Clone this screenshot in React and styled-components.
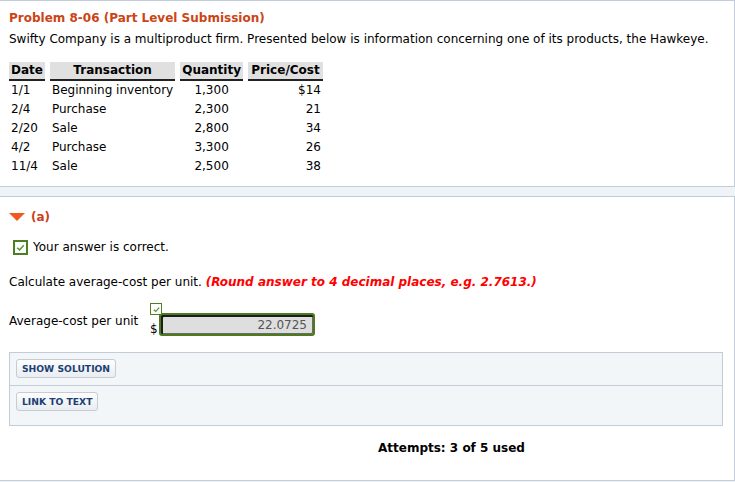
import React from "react";
import styled, { createGlobalStyle } from "styled-components";

const Global = createGlobalStyle`
  html, body { margin: 0; padding: 0; }
  body {
    background: #eef3f8;
    font-family: "DejaVu Sans", Verdana, sans-serif;
    font-size: 12px;
    color: #000;
  }
`;

const Page = styled.div`
  display: flex;
  flex-direction: column;
  gap: 9px;
  width: 735px;
`;

const Panel = styled.section`
  background: #fff;
  border: 1px solid #c3cdd9;
  border-left: none;
  box-sizing: border-box;
  height: ${(p) => p.$h}px;
  padding: ${(p) => p.$pad};
`;

const Title = styled.h1`
  margin: 0;
  font-size: 12px;
  font-weight: bold;
  color: #cc4416;
  line-height: 16px;
`;

const Text = styled.p`
  margin: ${(p) => p.$m || "0"};
  line-height: 16px;
  font-size: 12px;
`;

const Table = styled.table`
  border-collapse: separate;
  border-spacing: 5px 0;
  margin: 15px 0 0 -5px;
  font-size: 12px;
  table-layout: fixed;
`;

const Th = styled.th`
  background: #e0e0e0;
  border-bottom: 2px solid #222;
  font-weight: bold;
  padding: 0 2px;
  height: 17px;
  line-height: 17px;
  text-align: ${(p) => p.$align || "center"};
  width: ${(p) => p.$w}px;
  white-space: nowrap;
`;

const Td = styled.td`
  padding: 0 2px;
  height: 19px;
  line-height: 19px;
  text-align: ${(p) => p.$align || "left"};
  white-space: nowrap;
`;

const PartHeader = styled.div`
  display: flex;
  align-items: center;
  gap: 6px;
  color: #c9421a;
  font-weight: bold;
  font-size: 12px;
  line-height: 16px;
`;

const Triangle = styled.svg`
  width: 16px;
  height: 8px;
  display: block;
`;

const Correct = styled.div`
  display: flex;
  align-items: center;
  gap: 5px;
  margin: 14px 0 0 4px;
  line-height: 16px;
`;

const CheckBox = styled.span`
  display: inline-flex;
  align-items: center;
  justify-content: center;
  box-sizing: border-box;
  width: ${(p) => p.$size}px;
  height: ${(p) => p.$size}px;
  border: ${(p) => (p.$size > 13 ? 2 : 1)}px solid #4f7d22;
  background: #fff;
`;

const Hint = styled.span`
  color: #ff0000;
  font-weight: bold;
  font-style: italic;
`;

const AnswerRow = styled.div`
  display: flex;
  align-items: flex-start;
  margin-top: 13px;
`;

const AnswerLabel = styled.span`
  line-height: 16px;
  margin-top: 10px;
  width: 141px;
`;

const Field = styled.div`
  position: relative;
  display: flex;
  align-items: flex-end;
  padding-top: 10px;
`;

const Dollar = styled.span`
  font-size: 12px;
  line-height: 12px;
  width: 9px;
  margin-bottom: 1px;
`;

const FieldCheck = styled(CheckBox)`
  position: absolute;
  top: 0;
  left: 0;
`;

const Input = styled.div`
  box-sizing: border-box;
  width: 156px;
  height: 23px;
  border: 2px solid #4e7a1f;
  border-radius: 3px;
  box-shadow: inset 2px 2px 0 #1c1c1c, inset -1px -1px 0 #6a6a6a;
  background: #dedede;
  color: #555;
  text-align: right;
  padding: 0 6px 0 0;
  line-height: 20px;
  font-size: 12px;
`;

const SolutionBox = styled.div`
  margin: 16px 2px 0 0;
  border: 1px solid #c3cdd9;
  background: #f3f6f9;
`;

const SolutionRow = styled.div`
  padding: ${(p) => p.$pad};
  & + & { border-top: 1px solid #c3cdd9; }
`;

const Button = styled.button`
  display: block;
  box-sizing: border-box;
  height: 19px;
  padding: 0 5px;
  font-family: "DejaVu Sans", Verdana, sans-serif;
  font-size: 9.2px;
  font-weight: bold;
  color: #1d3f73;
  background: linear-gradient(#fdfdfe, #e9edf1);
  border: 1px solid #c6ccd4;
  border-radius: 3px;
`;

const Attempts = styled.div`
  margin: 14px 0 0 369px;
  font-weight: bold;
  line-height: 16px;
`;

const CheckMark = ({ size }) => (
  <svg width={size} height={size} viewBox="0 0 10 10">
    <path d="M2 5.2 L4.2 7.2 L8 3" fill="none" stroke="#4f9a2a" strokeWidth="1.4" />
  </svg>
);

const rows = [
  ["1/1", "Beginning inventory", "1,300", "$14"],
  ["2/4", "Purchase", "2,300", "21"],
  ["2/20", "Sale", "2,800", "34"],
  ["4/2", "Purchase", "3,300", "26"],
  ["11/4", "Sale", "2,500", "38"],
];

export default function App() {
  return (
    <>
      <Global />
      <Page>
        <Panel $h={187} $pad="9px 9px">
          <Title>Problem 8-06 (Part Level Submission)</Title>
          <Text $m="5px 0 0">
            Swifty Company is a multiproduct firm. Presented below is information concerning one of its products, the Hawkeye.
          </Text>
          <Table>
            <thead>
              <tr>
                <Th $w={31} $align="left">Date</Th>
                <Th $w={120}>Transaction</Th>
                <Th $w={58}>Quantity</Th>
                <Th $w={71}>Price/Cost</Th>
              </tr>
            </thead>
            <tbody>
              {rows.map((r) => (
                <tr key={r[0]}>
                  <Td>{r[0]}</Td>
                  <Td>{r[1]}</Td>
                  <Td $align="center">{r[2]}</Td>
                  <Td $align="right">{r[3]}</Td>
                </tr>
              ))}
            </tbody>
          </Table>
        </Panel>
        <Panel $h={285} $pad="12px 9px">
          <PartHeader>
            <Triangle viewBox="0 0 16 8">
              <polygon points="0,0 16,0 8,8" fill="#f05a1e" />
            </Triangle>
            (a)
          </PartHeader>
          <Correct>
            <CheckBox $size={15}>
              <CheckMark size={11} />
            </CheckBox>
            Your answer is correct.
          </Correct>
          <Text $m="19px 0 0">
            Calculate average-cost per unit. <Hint>(Round answer to 4 decimal places, e.g. 2.7613.)</Hint>
          </Text>
          <AnswerRow>
            <AnswerLabel>Average-cost per unit</AnswerLabel>
            <Field>
              <FieldCheck $size={12}>
                <CheckMark size={9} />
              </FieldCheck>
              <Dollar>$</Dollar>
              <Input>22.0725</Input>
            </Field>
          </AnswerRow>
          <SolutionBox>
            <SolutionRow $pad="6px 6px 7px">
              <Button>SHOW SOLUTION</Button>
            </SolutionRow>
            <SolutionRow $pad="6px 6px 14px">
              <Button>LINK TO TEXT</Button>
            </SolutionRow>
          </SolutionBox>
          <Attempts>Attempts: 3 of 5 used</Attempts>
        </Panel>
      </Page>
    </>
  );
}
